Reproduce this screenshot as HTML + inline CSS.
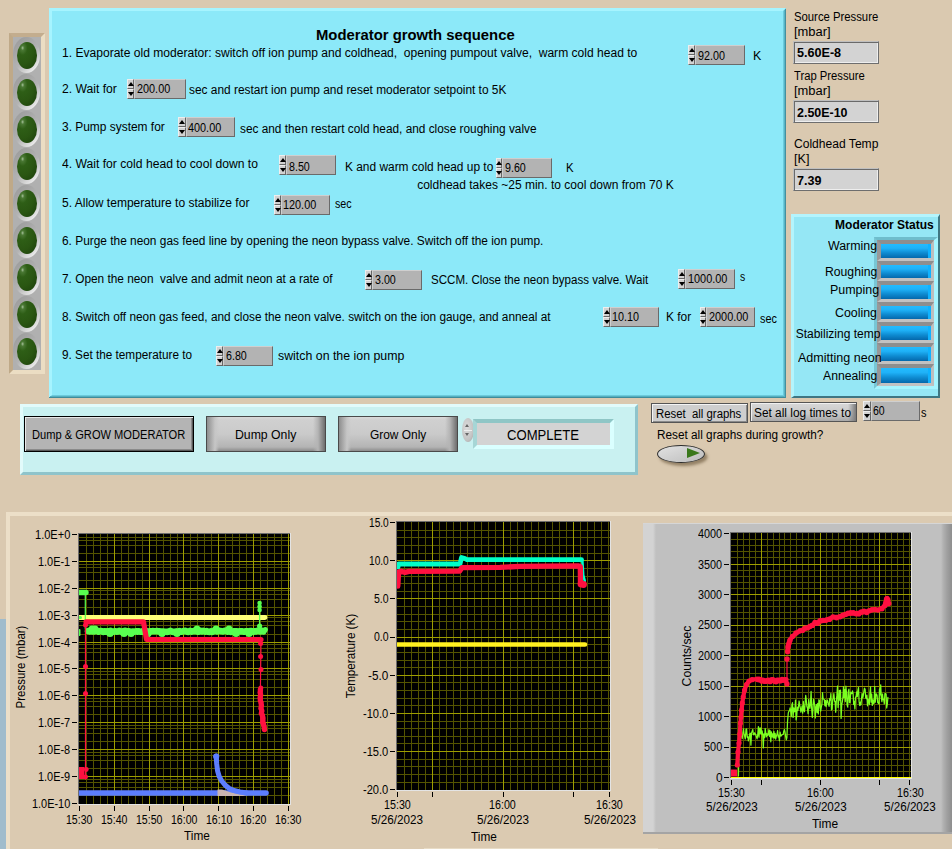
<!DOCTYPE html>
<html lang="en"><head><meta charset="utf-8"><title>Moderator growth sequence</title>
<style>
html,body{margin:0;padding:0;background:#DAC9B0;}
#r{position:relative;width:952px;height:849px;overflow:hidden;background:#DAC9B0;font-family:"Liberation Sans",sans-serif;color:#000;}
#r div,#r span,#r i{position:absolute;box-sizing:border-box;}
.t{white-space:pre;line-height:1;font-size:12px;transform-origin:0 50%;}
.led{width:19.8px;height:27px;border-radius:50%;background:radial-gradient(ellipse at 28% 22%,#A4C098 0,#4A7834 8%,#2E5E16 24%,#2A5612 55%,#1A3C0A 100%);}
.ledb{width:27px;height:35.6px;border-radius:50%;background:linear-gradient(135deg,#989898 0%,#A6A6A6 30%,#B4B4B4 55%,#D8D8D8 76%,#F2F2F2 90%,#E0E0E0 100%);}
i.up,i.dn{left:50%;margin-left:-3px;width:0;height:0;border-style:solid;border-color:transparent;}
i.up{top:1.5px;border-width:0 3px 4.5px 3px;border-bottom-color:#000;}
i.dn{top:2px;border-width:4.5px 3px 0 3px;border-top-color:#000;}
</style></head>
<body><div id="r">
<div style="left:49px;top:8px;width:737px;height:390px;background:#8CE9F9;border-style:solid;border-width:3px;border-color:#A6F4FF #6CCBDC #6CCBDC #A6F4FF;"></div>
<div style="left:50px;top:396px;width:736px;height:1px;background:#55AFC0;"></div>
<div style="left:49px;top:397px;width:737px;height:1px;background:#3E8C9B;"></div>
<div style="left:784px;top:10px;width:1px;height:387px;background:#58B4C6;"></div>
<div style="left:785px;top:9px;width:1px;height:389px;background:#44909F;"></div>
<div style="left:9px;top:33px;width:36px;height:341px;border-style:solid;border-width:4px;border-color:#C3AD8E #EBDDC3 #EBDDC3 #BFA988;background:#B0B0B0;"></div>
<div class="ledb" style="left:13.3px;top:37.4px"></div>
<div class="led" style="left:16.8px;top:41.7px"></div>
<div class="ledb" style="left:13.3px;top:74.4px"></div>
<div class="led" style="left:16.8px;top:78.7px"></div>
<div class="ledb" style="left:13.3px;top:111.4px"></div>
<div class="led" style="left:16.8px;top:115.7px"></div>
<div class="ledb" style="left:13.3px;top:148.4px"></div>
<div class="led" style="left:16.8px;top:152.7px"></div>
<div class="ledb" style="left:13.3px;top:185.4px"></div>
<div class="led" style="left:16.8px;top:189.7px"></div>
<div class="ledb" style="left:13.3px;top:222.4px"></div>
<div class="led" style="left:16.8px;top:226.7px"></div>
<div class="ledb" style="left:13.3px;top:259.4px"></div>
<div class="led" style="left:16.8px;top:263.7px"></div>
<div class="ledb" style="left:13.3px;top:296.4px"></div>
<div class="led" style="left:16.8px;top:300.7px"></div>
<div class="ledb" style="left:13.3px;top:333.4px"></div>
<div class="led" style="left:16.8px;top:337.7px"></div>
<span id="t0" class="t" style="left:316.20px;top:28.43px;font-size:14.5px;font-weight:bold;transform:scaleX(1.0233);">Moderator growth sequence</span>
<div style="left:688px;top:45px;width:7px;height:10px;background:#D2D2D2;border-style:solid;border-width:1px;border-color:#EEE #666 #666 #EEE;"><i class="up"></i></div>
<div style="left:688px;top:55px;width:7px;height:10px;background:#D2D2D2;border-style:solid;border-width:1px;border-color:#EEE #666 #666 #EEE;"><i class="dn"></i></div>
<div style="left:695px;top:45px;width:50px;height:20px;background:#B3B3B3;border-style:solid;border-width:1px;border-color:#CFCFCF #6A6A6A #6A6A6A #CFCFCF;"></div>
<span id="t1" class="t" style="left:698.20px;top:49.54px;transform:scaleX(0.8991);">92.00</span>
<div style="left:127px;top:79px;width:7px;height:10px;background:#D2D2D2;border-style:solid;border-width:1px;border-color:#EEE #666 #666 #EEE;"><i class="up"></i></div>
<div style="left:127px;top:89px;width:7px;height:10px;background:#D2D2D2;border-style:solid;border-width:1px;border-color:#EEE #666 #666 #EEE;"><i class="dn"></i></div>
<div style="left:134px;top:79px;width:52px;height:20px;background:#B3B3B3;border-style:solid;border-width:1px;border-color:#CFCFCF #6A6A6A #6A6A6A #CFCFCF;"></div>
<span id="t2" class="t" style="left:136.90px;top:83.14px;transform:scaleX(0.9046);">200.00</span>
<div style="left:178px;top:117px;width:8px;height:10px;background:#D2D2D2;border-style:solid;border-width:1px;border-color:#EEE #666 #666 #EEE;"><i class="up"></i></div>
<div style="left:178px;top:127px;width:8px;height:10px;background:#D2D2D2;border-style:solid;border-width:1px;border-color:#EEE #666 #666 #EEE;"><i class="dn"></i></div>
<div style="left:186px;top:117px;width:49px;height:20px;background:#B3B3B3;border-style:solid;border-width:1px;border-color:#CFCFCF #6A6A6A #6A6A6A #CFCFCF;"></div>
<span id="t3" class="t" style="left:187.70px;top:121.54px;transform:scaleX(0.9046);">400.00</span>
<div style="left:279px;top:155px;width:7px;height:10px;background:#D2D2D2;border-style:solid;border-width:1px;border-color:#EEE #666 #666 #EEE;"><i class="up"></i></div>
<div style="left:279px;top:165px;width:7px;height:10px;background:#D2D2D2;border-style:solid;border-width:1px;border-color:#EEE #666 #666 #EEE;"><i class="dn"></i></div>
<div style="left:286px;top:155px;width:50px;height:20px;background:#B3B3B3;border-style:solid;border-width:1px;border-color:#CFCFCF #6A6A6A #6A6A6A #CFCFCF;"></div>
<span id="t4" class="t" style="left:289.20px;top:160.54px;transform:scaleX(0.8904);">8.50</span>
<div style="left:496px;top:158px;width:6px;height:10px;background:#D2D2D2;border-style:solid;border-width:1px;border-color:#EEE #666 #666 #EEE;"><i class="up"></i></div>
<div style="left:496px;top:168px;width:6px;height:10px;background:#D2D2D2;border-style:solid;border-width:1px;border-color:#EEE #666 #666 #EEE;"><i class="dn"></i></div>
<div style="left:502px;top:158px;width:50px;height:20px;background:#B3B3B3;border-style:solid;border-width:1px;border-color:#CFCFCF #6A6A6A #6A6A6A #CFCFCF;"></div>
<span id="t5" class="t" style="left:504.90px;top:162.34px;transform:scaleX(0.8904);">9.60</span>
<div style="left:274px;top:195px;width:7px;height:10px;background:#D2D2D2;border-style:solid;border-width:1px;border-color:#EEE #666 #666 #EEE;"><i class="up"></i></div>
<div style="left:274px;top:205px;width:7px;height:10px;background:#D2D2D2;border-style:solid;border-width:1px;border-color:#EEE #666 #666 #EEE;"><i class="dn"></i></div>
<div style="left:281px;top:195px;width:49px;height:20px;background:#B3B3B3;border-style:solid;border-width:1px;border-color:#CFCFCF #6A6A6A #6A6A6A #CFCFCF;"></div>
<span id="t6" class="t" style="left:282.90px;top:198.84px;transform:scaleX(0.9046);">120.00</span>
<div style="left:365px;top:270px;width:7px;height:10px;background:#D2D2D2;border-style:solid;border-width:1px;border-color:#EEE #666 #666 #EEE;"><i class="up"></i></div>
<div style="left:365px;top:280px;width:7px;height:10px;background:#D2D2D2;border-style:solid;border-width:1px;border-color:#EEE #666 #666 #EEE;"><i class="dn"></i></div>
<div style="left:372px;top:270px;width:50px;height:20px;background:#B3B3B3;border-style:solid;border-width:1px;border-color:#CFCFCF #6A6A6A #6A6A6A #CFCFCF;"></div>
<span id="t7" class="t" style="left:375.10px;top:274.04px;transform:scaleX(0.8904);">3.00</span>
<div style="left:678px;top:269px;width:7px;height:10px;background:#D2D2D2;border-style:solid;border-width:1px;border-color:#EEE #666 #666 #EEE;"><i class="up"></i></div>
<div style="left:678px;top:279px;width:7px;height:10px;background:#D2D2D2;border-style:solid;border-width:1px;border-color:#EEE #666 #666 #EEE;"><i class="dn"></i></div>
<div style="left:685px;top:269px;width:50px;height:20px;background:#B3B3B3;border-style:solid;border-width:1px;border-color:#CFCFCF #6A6A6A #6A6A6A #CFCFCF;"></div>
<span id="t8" class="t" style="left:688.00px;top:272.94px;transform:scaleX(0.9080);">1000.00</span>
<div style="left:603px;top:307px;width:7px;height:10px;background:#D2D2D2;border-style:solid;border-width:1px;border-color:#EEE #666 #666 #EEE;"><i class="up"></i></div>
<div style="left:603px;top:317px;width:7px;height:10px;background:#D2D2D2;border-style:solid;border-width:1px;border-color:#EEE #666 #666 #EEE;"><i class="dn"></i></div>
<div style="left:610px;top:307px;width:49px;height:20px;background:#B3B3B3;border-style:solid;border-width:1px;border-color:#CFCFCF #6A6A6A #6A6A6A #CFCFCF;"></div>
<span id="t9" class="t" style="left:612.40px;top:311.04px;transform:scaleX(0.8991);">10.10</span>
<div style="left:700px;top:307px;width:6px;height:10px;background:#D2D2D2;border-style:solid;border-width:1px;border-color:#EEE #666 #666 #EEE;"><i class="up"></i></div>
<div style="left:700px;top:317px;width:6px;height:10px;background:#D2D2D2;border-style:solid;border-width:1px;border-color:#EEE #666 #666 #EEE;"><i class="dn"></i></div>
<div style="left:706px;top:307px;width:49px;height:20px;background:#B3B3B3;border-style:solid;border-width:1px;border-color:#CFCFCF #6A6A6A #6A6A6A #CFCFCF;"></div>
<span id="t10" class="t" style="left:708.70px;top:311.04px;transform:scaleX(0.9080);">2000.00</span>
<div style="left:216px;top:346px;width:7px;height:10px;background:#D2D2D2;border-style:solid;border-width:1px;border-color:#EEE #666 #666 #EEE;"><i class="up"></i></div>
<div style="left:216px;top:356px;width:7px;height:10px;background:#D2D2D2;border-style:solid;border-width:1px;border-color:#EEE #666 #666 #EEE;"><i class="dn"></i></div>
<div style="left:223px;top:346px;width:50px;height:20px;background:#B3B3B3;border-style:solid;border-width:1px;border-color:#CFCFCF #6A6A6A #6A6A6A #CFCFCF;"></div>
<span id="t11" class="t" style="left:226.20px;top:349.94px;transform:scaleX(0.8904);">6.80</span>
<div style="left:863px;top:401px;width:8px;height:10px;background:#D2D2D2;border-style:solid;border-width:1px;border-color:#EEE #666 #666 #EEE;"><i class="up"></i></div>
<div style="left:863px;top:411px;width:8px;height:10px;background:#D2D2D2;border-style:solid;border-width:1px;border-color:#EEE #666 #666 #EEE;"><i class="dn"></i></div>
<div style="left:871px;top:401px;width:49px;height:20px;background:#B3B3B3;border-style:solid;border-width:1px;border-color:#CFCFCF #6A6A6A #6A6A6A #CFCFCF;"></div>
<span id="t12" class="t" style="left:873.20px;top:404.74px;transform:scaleX(0.8758);">60</span>
<span id="t13" class="t" style="left:61.70px;top:46.84px;transform:scaleX(1.0055);">1. Evaporate old moderator: switch off ion pump and coldhead,  opening pumpout valve,  warm cold head to</span>
<span id="t14" class="t" style="left:753.20px;top:49.84px;transform:scaleX(1.0355);">K</span>
<span id="t15" class="t" style="left:61.70px;top:82.84px;transform:scaleX(1.0104);">2. Wait for</span>
<span id="t16" class="t" style="left:189.10px;top:84.04px;transform:scaleX(0.9913);">sec and restart ion pump and reset moderator setpoint to 5K</span>
<span id="t17" class="t" style="left:61.70px;top:120.84px;transform:scaleX(0.9944);">3. Pump system for</span>
<span id="t18" class="t" style="left:240.00px;top:122.54px;transform:scaleX(0.9855);">sec and then restart cold head, and close roughing valve</span>
<span id="t19" class="t" style="left:61.70px;top:158.34px;transform:scaleX(1.0120);">4. Wait for cold head to cool down to</span>
<span id="t20" class="t" style="left:345.40px;top:161.34px;transform:scaleX(0.9924);">K and warm cold head up to</span>
<span id="t21" class="t" style="left:566.20px;top:161.84px;transform:scaleX(0.9481);">K</span>
<span id="t22" class="t" style="left:417.20px;top:179.44px;">coldhead takes ~25 min. to cool down from 70 K</span>
<span id="t23" class="t" style="left:61.70px;top:196.84px;transform:scaleX(1.0034);">5. Allow temperature to stabilize for</span>
<span id="t24" class="t" style="left:335.30px;top:197.84px;transform:scaleX(0.8936);">sec</span>
<span id="t25" class="t" style="left:61.70px;top:234.84px;transform:scaleX(0.9903);">6. Purge the neon gas feed line by opening the neon bypass valve. Switch off the ion pump.</span>
<span id="t26" class="t" style="left:61.70px;top:272.84px;transform:scaleX(0.9869);">7. Open the neon  valve and admit neon at a rate of</span>
<span id="t27" class="t" style="left:431.00px;top:273.84px;transform:scaleX(0.9625);">SCCM. Close the neon bypass valve. Wait</span>
<span id="t28" class="t" style="left:740.30px;top:270.84px;transform:scaleX(0.8667);">s</span>
<span id="t29" class="t" style="left:61.70px;top:310.84px;transform:scaleX(0.9846);">8. Switch off neon gas feed, and close the neon valve. switch on the ion gauge, and anneal at</span>
<span id="t30" class="t" style="left:666.30px;top:310.84px;transform:scaleX(0.9943);">K for</span>
<span id="t31" class="t" style="left:760.20px;top:312.54px;transform:scaleX(0.9043);">sec</span>
<span id="t32" class="t" style="left:61.70px;top:348.84px;transform:scaleX(0.9793);">9. Set the temperature to</span>
<span id="t33" class="t" style="left:277.70px;top:349.84px;transform:scaleX(1.0297);">switch on the ion pump</span>
<span id="t34" class="t" style="left:793.70px;top:11.34px;transform:scaleX(0.9421);">Source Pressure</span>
<span id="t35" class="t" style="left:793.70px;top:26.24px;transform:scaleX(1.0760);">[mbar]</span>
<div style="left:793px;top:41px;width:86px;height:23px;background:#D3D3D3;border-style:solid;border-width:1px;border-color:#BFBFBF #6E6E6E #6E6E6E #BFBFBF;box-shadow:inset 1px 1px 0 #6A6A6A, inset -1px -1px 0 #EEE;"></div>
<span id="t36" class="t" style="left:796.60px;top:47.34px;font-weight:bold;transform:scaleX(1.0492);">5.60E-8</span>
<span id="t37" class="t" style="left:793.70px;top:69.84px;transform:scaleX(0.9366);">Trap Pressure</span>
<span id="t38" class="t" style="left:793.70px;top:84.64px;transform:scaleX(1.0760);">[mbar]</span>
<div style="left:793px;top:100px;width:86px;height:23px;background:#D3D3D3;border-style:solid;border-width:1px;border-color:#BFBFBF #6E6E6E #6E6E6E #BFBFBF;box-shadow:inset 1px 1px 0 #6A6A6A, inset -1px -1px 0 #EEE;"></div>
<span id="t39" class="t" style="left:796.60px;top:106.84px;font-weight:bold;transform:scaleX(1.0369);">2.50E-10</span>
<span id="t40" class="t" style="left:793.70px;top:137.84px;transform:scaleX(1.0066);">Coldhead Temp</span>
<span id="t41" class="t" style="left:793.70px;top:152.84px;transform:scaleX(1.0496);">[K]</span>
<div style="left:793px;top:168px;width:86px;height:23px;background:#D3D3D3;border-style:solid;border-width:1px;border-color:#BFBFBF #6E6E6E #6E6E6E #BFBFBF;box-shadow:inset 1px 1px 0 #6A6A6A, inset -1px -1px 0 #EEE;"></div>
<span id="t42" class="t" style="left:796.60px;top:175.34px;font-weight:bold;transform:scaleX(1.0445);">7.39</span>
<div style="left:791px;top:214px;width:149px;height:184px;background:#95E7F5;border-style:solid;border-width:3px 2px 2px 3px;border-color:#B4F4FC #3F7682 #3F7682 #B4F4FC;"></div>
<span id="t43" class="t" style="left:835.10px;top:218.94px;font-weight:bold;">Moderator Status</span>
<div style="left:874px;top:237px;width:64px;height:152px;border-style:solid;border-width:3px 4px 3px 3px;border-color:#6FBDCC #A6F5FF #A6F5FF #78C6D4;background:#B0B0B0;"></div>
<div style="left:877px;top:240px;width:57px;height:21px;border-style:solid;border-width:4px 3px 3px 4px;border-color:#8E8E8E #BEBEBE #C2C2C2 #989898;background:#B0B0B0;"></div>
<div style="left:877px;top:261px;width:57px;height:20px;border-style:solid;border-width:4px 3px 3px 4px;border-color:#8E8E8E #BEBEBE #C2C2C2 #989898;background:#B0B0B0;"></div>
<div style="left:877px;top:281px;width:57px;height:21px;border-style:solid;border-width:4px 3px 3px 4px;border-color:#8E8E8E #BEBEBE #C2C2C2 #989898;background:#B0B0B0;"></div>
<div style="left:877px;top:302px;width:57px;height:20px;border-style:solid;border-width:4px 3px 3px 4px;border-color:#8E8E8E #BEBEBE #C2C2C2 #989898;background:#B0B0B0;"></div>
<div style="left:877px;top:322px;width:57px;height:21px;border-style:solid;border-width:4px 3px 3px 4px;border-color:#8E8E8E #BEBEBE #C2C2C2 #989898;background:#B0B0B0;"></div>
<div style="left:877px;top:343px;width:57px;height:21px;border-style:solid;border-width:4px 3px 3px 4px;border-color:#8E8E8E #BEBEBE #C2C2C2 #989898;background:#B0B0B0;"></div>
<div style="left:877px;top:364px;width:57px;height:22px;border-style:solid;border-width:4px 3px 3px 4px;border-color:#8E8E8E #BEBEBE #C2C2C2 #989898;background:#B0B0B0;"></div>
<span id="t44" class="t" style="left:828.00px;top:239.64px;transform:scaleX(1.0323);">Warming</span>
<span id="t45" class="t" style="left:824.90px;top:265.54px;transform:scaleX(1.0161);">Roughing</span>
<span id="t46" class="t" style="left:829.90px;top:284.34px;transform:scaleX(1.0364);">Pumping</span>
<span id="t47" class="t" style="left:835.10px;top:307.04px;transform:scaleX(1.0319);">Cooling</span>
<span id="t48" class="t" style="left:795.70px;top:327.54px;">Stabilizing temp</span>
<span id="t49" class="t" style="left:798.10px;top:351.54px;transform:scaleX(1.0454);">Admitting neon</span>
<span id="t50" class="t" style="left:822.70px;top:369.64px;transform:scaleX(1.0189);">Annealing</span>
<div style="left:881px;top:244px;width:50px;height:14px;background:linear-gradient(#22BBFF 0%,#1FB2F8 30%,#0E8AD0 65%,#0468AC 100%);"><i style="position:absolute;right:0;top:0;bottom:0;width:3px;background:#0FB2FF"></i></div>
<div style="left:881px;top:265px;width:50px;height:13px;background:linear-gradient(#22BBFF 0%,#1FB2F8 30%,#0E8AD0 65%,#0468AC 100%);"><i style="position:absolute;right:0;top:0;bottom:0;width:3px;background:#0FB2FF"></i></div>
<div style="left:881px;top:285px;width:50px;height:14px;background:linear-gradient(#22BBFF 0%,#1FB2F8 30%,#0E8AD0 65%,#0468AC 100%);"><i style="position:absolute;right:0;top:0;bottom:0;width:3px;background:#0FB2FF"></i></div>
<div style="left:881px;top:306px;width:50px;height:13px;background:linear-gradient(#22BBFF 0%,#1FB2F8 30%,#0E8AD0 65%,#0468AC 100%);"><i style="position:absolute;right:0;top:0;bottom:0;width:3px;background:#0FB2FF"></i></div>
<div style="left:881px;top:326px;width:50px;height:14px;background:linear-gradient(#22BBFF 0%,#1FB2F8 30%,#0E8AD0 65%,#0468AC 100%);"><i style="position:absolute;right:0;top:0;bottom:0;width:3px;background:#0FB2FF"></i></div>
<div style="left:881px;top:347px;width:50px;height:14px;background:linear-gradient(#22BBFF 0%,#1FB2F8 30%,#0E8AD0 65%,#0468AC 100%);"><i style="position:absolute;right:0;top:0;bottom:0;width:3px;background:#0FB2FF"></i></div>
<div style="left:881px;top:368px;width:50px;height:15px;background:linear-gradient(#22BBFF 0%,#1FB2F8 30%,#0E8AD0 65%,#0468AC 100%);"><i style="position:absolute;right:0;top:0;bottom:0;width:3px;background:#0FB2FF"></i></div>
<div style="left:20px;top:404px;width:618px;height:71px;background:#C9F1F1;border-style:solid;border-width:3px;border-color:#E2FBFB #8FC4CB #8FC4CB #E2FBFB;"></div>
<div style="left:24px;top:416px;width:170px;height:36px;background:#B4B4B4;border:1px solid #000;box-shadow:inset 1px 1px 0 #E8E8E8, inset -1px -1px 0 #5A5A5A, inset -2px -2px 0 #8A8A8A;"></div>
<span id="t51" class="t" style="left:31.90px;top:428.74px;transform:scaleX(0.9258);">Dump &amp; GROW MODERATOR</span>
<div style="left:206px;top:416px;width:120px;height:36px;border:1px solid #4A4A4A;background:linear-gradient(90deg,#8E8E8E 0,#C6C6C6 8px,rgba(198,198,198,0) 12px,rgba(198,198,198,0) calc(100% - 12px),#B4B4B4 calc(100% - 7px),#6E6E6E 100%),linear-gradient(#DADADA 0,#D0D0D0 3px,#CACACA 50%,#B4B4B4 calc(100% - 4px),#8C8C8C 100%);"></div>
<span id="t52" class="t" style="left:235.10px;top:428.74px;transform:scaleX(1.0211);">Dump Only</span>
<div style="left:338px;top:416px;width:120px;height:36px;border:1px solid #4A4A4A;background:linear-gradient(90deg,#8E8E8E 0,#C6C6C6 8px,rgba(198,198,198,0) 12px,rgba(198,198,198,0) calc(100% - 12px),#B4B4B4 calc(100% - 7px),#6E6E6E 100%),linear-gradient(#DADADA 0,#D0D0D0 3px,#CACACA 50%,#B4B4B4 calc(100% - 4px),#8C8C8C 100%);"></div>
<span id="t53" class="t" style="left:369.90px;top:428.74px;transform:scaleX(0.9932);">Grow Only</span>
<div style="left:462px;top:418px;width:12px;height:24px;border-radius:50%;background:radial-gradient(ellipse at 40% 40%,#DCDCDC 0,#C4C4C4 60%,#9A9A9A 100%);"></div>
<div style="left:464px;top:429.5px;width:8px;height:1px;background:#EEE"></div>
<i class="up" style="left:467.5px;top:423.5px;border-width:0 2.5px 3.5px 2.5px;border-bottom-color:#666"></i><i class="dn" style="left:467.5px;top:433px;border-width:3.5px 2.5px 0 2.5px;border-top-color:#666"></i>
<div style="left:473px;top:419px;width:141px;height:30px;background:#D3D3D3;border-style:solid;border-width:4px;border-color:#8FC6C6 #DAFFFF #DAFFFF #A6D6D6;"></div>
<span id="t54" class="t" style="left:507.10px;top:427.53px;font-size:14.5px;transform:scaleX(0.9039);">COMPLETE</span>
<div style="left:651px;top:403px;width:97px;height:20px;background:#CECECE;border:1px solid #555;box-shadow:inset 1px 1px 0 #F4F4F4, inset -1px -1px 0 #8A8A8A;"></div>
<span id="t55" class="t" style="left:656.00px;top:408.34px;transform:scaleX(0.9473);">Reset  all graphs</span>
<div style="left:750px;top:402px;width:107px;height:20px;border:1px solid #555;background:linear-gradient(90deg,rgba(0,0,0,0) calc(100% - 8px),#7A7A7A 100%),linear-gradient(#D8D8D8,#C8C8C8 60%,#A8A8A8);box-shadow:inset 1px 1px 0 #F0F0F0;"></div>
<span id="t56" class="t" style="left:754.00px;top:407.34px;transform:scaleX(0.9893);">Set all log times to</span>
<span id="t57" class="t" style="left:921.10px;top:407.34px;transform:scaleX(0.9167);">s</span>
<span id="t58" class="t" style="left:657.00px;top:428.64px;transform:scaleX(0.9815);">Reset all graphs during growth?</span>
<div style="left:657px;top:444.5px;width:48px;height:18px;border-radius:50%;background:linear-gradient(160deg,#E2E2E2,#CFCFCF 50%,#BDBDBD);border:1.3px solid #2E2E2E;box-sizing:border-box;box-shadow:2.5px 3px 3px rgba(90,70,40,.55);"></div>
<div style="left:686.8px;top:448.4px;width:0;height:0;border-style:solid;border-width:5px 0 5px 13px;border-color:transparent transparent transparent #3A781C;"></div>
<div style="left:6px;top:512px;width:954px;height:348px;background:#DBCAB1;border-style:solid;border-width:4px;border-color:#ECDFC8 #ECDFC8 #ECDFC8 #ECDFC8;"></div>
<div style="left:0px;top:619px;width:6px;height:230px;background:#A0BCCC;"></div>
<div style="left:424px;top:848px;width:234px;height:1px;background:#E8DCC6;"></div>
<div style="left:643px;top:523px;width:317px;height:311px;background:linear-gradient(90deg,#D3D3D3 0,#D3D3D3 10px,#C0C0C0 13px,#C0C0C0 298px,#B2B2B2 300px,#A0A0A0 304px,#8E8E8E 309px);border-top:1px solid #D6D6D6;border-bottom:2px solid #A4A4A4;"></div>
<svg width="952" height="849" viewBox="0 0 952 849" style="position:absolute;left:0;top:0">
<g shape-rendering="crispEdges">
<rect x="78" y="533" width="213" height="272" fill="#000"/>
<rect x="86" y="534" width="1" height="271" fill="#545400"/>
<rect x="93" y="534" width="1" height="271" fill="#545400"/>
<rect x="100" y="534" width="1" height="271" fill="#545400"/>
<rect x="107" y="534" width="1" height="271" fill="#545400"/>
<rect x="121" y="534" width="1" height="271" fill="#545400"/>
<rect x="128" y="534" width="1" height="271" fill="#545400"/>
<rect x="135" y="534" width="1" height="271" fill="#545400"/>
<rect x="142" y="534" width="1" height="271" fill="#545400"/>
<rect x="156" y="534" width="1" height="271" fill="#545400"/>
<rect x="163" y="534" width="1" height="271" fill="#545400"/>
<rect x="170" y="534" width="1" height="271" fill="#545400"/>
<rect x="177" y="534" width="1" height="271" fill="#545400"/>
<rect x="190" y="534" width="1" height="271" fill="#545400"/>
<rect x="197" y="534" width="1" height="271" fill="#545400"/>
<rect x="204" y="534" width="1" height="271" fill="#545400"/>
<rect x="211" y="534" width="1" height="271" fill="#545400"/>
<rect x="225" y="534" width="1" height="271" fill="#545400"/>
<rect x="232" y="534" width="1" height="271" fill="#545400"/>
<rect x="239" y="534" width="1" height="271" fill="#545400"/>
<rect x="246" y="534" width="1" height="271" fill="#545400"/>
<rect x="260" y="534" width="1" height="271" fill="#545400"/>
<rect x="267" y="534" width="1" height="271" fill="#545400"/>
<rect x="274" y="534" width="1" height="271" fill="#545400"/>
<rect x="281" y="534" width="1" height="271" fill="#545400"/>
<rect x="79" y="553" width="212" height="1" fill="#545400"/>
<rect x="79" y="545" width="212" height="1" fill="#545400"/>
<rect x="79" y="540" width="212" height="1" fill="#545400"/>
<rect x="79" y="537" width="212" height="1" fill="#545400"/>
<rect x="79" y="580" width="212" height="1" fill="#545400"/>
<rect x="79" y="572" width="212" height="1" fill="#545400"/>
<rect x="79" y="567" width="212" height="1" fill="#545400"/>
<rect x="79" y="564" width="212" height="1" fill="#545400"/>
<rect x="79" y="607" width="212" height="1" fill="#545400"/>
<rect x="79" y="599" width="212" height="1" fill="#545400"/>
<rect x="79" y="594" width="212" height="1" fill="#545400"/>
<rect x="79" y="590" width="212" height="1" fill="#545400"/>
<rect x="79" y="634" width="212" height="1" fill="#545400"/>
<rect x="79" y="625" width="212" height="1" fill="#545400"/>
<rect x="79" y="621" width="212" height="1" fill="#545400"/>
<rect x="79" y="617" width="212" height="1" fill="#545400"/>
<rect x="79" y="660" width="212" height="1" fill="#545400"/>
<rect x="79" y="652" width="212" height="1" fill="#545400"/>
<rect x="79" y="648" width="212" height="1" fill="#545400"/>
<rect x="79" y="644" width="212" height="1" fill="#545400"/>
<rect x="79" y="687" width="212" height="1" fill="#545400"/>
<rect x="79" y="679" width="212" height="1" fill="#545400"/>
<rect x="79" y="674" width="212" height="1" fill="#545400"/>
<rect x="79" y="671" width="212" height="1" fill="#545400"/>
<rect x="79" y="714" width="212" height="1" fill="#545400"/>
<rect x="79" y="706" width="212" height="1" fill="#545400"/>
<rect x="79" y="701" width="212" height="1" fill="#545400"/>
<rect x="79" y="698" width="212" height="1" fill="#545400"/>
<rect x="79" y="741" width="212" height="1" fill="#545400"/>
<rect x="79" y="733" width="212" height="1" fill="#545400"/>
<rect x="79" y="728" width="212" height="1" fill="#545400"/>
<rect x="79" y="725" width="212" height="1" fill="#545400"/>
<rect x="79" y="768" width="212" height="1" fill="#545400"/>
<rect x="79" y="760" width="212" height="1" fill="#545400"/>
<rect x="79" y="755" width="212" height="1" fill="#545400"/>
<rect x="79" y="752" width="212" height="1" fill="#545400"/>
<rect x="79" y="795" width="212" height="1" fill="#545400"/>
<rect x="79" y="787" width="212" height="1" fill="#545400"/>
<rect x="79" y="782" width="212" height="1" fill="#545400"/>
<rect x="79" y="779" width="212" height="1" fill="#545400"/>
<rect x="114" y="534" width="1" height="271" fill="#9E9E00"/>
<rect x="149" y="534" width="1" height="271" fill="#9E9E00"/>
<rect x="183" y="534" width="1" height="271" fill="#9E9E00"/>
<rect x="218" y="534" width="1" height="271" fill="#9E9E00"/>
<rect x="253" y="534" width="1" height="271" fill="#9E9E00"/>
<rect x="288" y="534" width="1" height="271" fill="#9E9E00"/>
<rect x="79" y="561" width="212" height="1" fill="#9E9E00"/>
<rect x="79" y="588" width="212" height="1" fill="#9E9E00"/>
<rect x="79" y="615" width="212" height="1" fill="#9E9E00"/>
<rect x="79" y="642" width="212" height="1" fill="#9E9E00"/>
<rect x="79" y="668" width="212" height="1" fill="#9E9E00"/>
<rect x="79" y="695" width="212" height="1" fill="#9E9E00"/>
<rect x="79" y="722" width="212" height="1" fill="#9E9E00"/>
<rect x="79" y="749" width="212" height="1" fill="#9E9E00"/>
<rect x="79" y="776" width="212" height="1" fill="#9E9E00"/>
<rect x="78" y="533" width="1" height="272" fill="#6E6E6E"/>
<rect x="78" y="533" width="213" height="1" fill="#6E6E6E"/>
<rect x="290" y="533" width="1" height="272" fill="#E4E4E4"/>
<rect x="78" y="804" width="213" height="1" fill="#E4E4E4"/>
<rect x="72" y="534" width="5" height="1" fill="#000"/>
<rect x="72" y="561" width="5" height="1" fill="#000"/>
<rect x="72" y="588" width="5" height="1" fill="#000"/>
<rect x="72" y="615" width="5" height="1" fill="#000"/>
<rect x="72" y="642" width="5" height="1" fill="#000"/>
<rect x="72" y="668" width="5" height="1" fill="#000"/>
<rect x="72" y="695" width="5" height="1" fill="#000"/>
<rect x="72" y="722" width="5" height="1" fill="#000"/>
<rect x="72" y="749" width="5" height="1" fill="#000"/>
<rect x="72" y="776" width="5" height="1" fill="#000"/>
<rect x="72" y="803" width="5" height="1" fill="#000"/>
<rect x="79" y="806" width="1" height="5" fill="#000"/>
<rect x="114" y="806" width="1" height="5" fill="#000"/>
<rect x="149" y="806" width="1" height="5" fill="#000"/>
<rect x="183" y="806" width="1" height="5" fill="#000"/>
<rect x="218" y="806" width="1" height="5" fill="#000"/>
<rect x="253" y="806" width="1" height="5" fill="#000"/>
<rect x="288" y="806" width="1" height="5" fill="#000"/>
</g>
<clipPath id="c1"><rect x="79" y="534" width="211" height="270"/></clipPath><g clip-path="url(#c1)">
<polyline points="79.0,617.5 265.0,617.5" fill="none" stroke="#FFFF78" stroke-width="4.8" stroke-linejoin="round" stroke-linecap="round" />
<polyline points="79.5,592.5 86.0,592.5" fill="none" stroke="#58FF50" stroke-width="5.4" stroke-linejoin="round" stroke-linecap="round" />
<polyline points="85.3,594.0 85.3,629.0" fill="none" stroke="#58FF50" stroke-width="1.2" stroke-linejoin="round" stroke-linecap="round" />
<polyline points="79.5,617.5 80.5,617.5" fill="none" stroke="#58FF50" stroke-width="3" stroke-linejoin="round" stroke-linecap="round" />
<polyline points="79.5,630.0 79.5,635.0" fill="none" stroke="#58FF50" stroke-width="2" stroke-linejoin="round" stroke-linecap="round" />
<polyline points="88.0,631.0 89.5,631.4 91.0,631.1 92.5,631.4 94.0,631.5 95.5,630.8 97.0,630.7 98.5,631.7 100.0,631.0 101.5,631.0 103.0,631.9 104.5,631.3 106.0,631.7 107.5,631.3 109.0,631.5 110.5,630.9 112.0,631.5 113.5,631.7 115.0,631.3 116.5,631.6 118.0,631.5 119.5,630.8 121.0,631.6 122.5,631.4 124.0,631.1 125.5,630.7 127.0,631.7 128.5,631.3 130.0,631.6 131.5,631.8 133.0,631.6 134.5,631.8 136.0,631.2 137.5,631.7 139.0,631.2 140.5,631.8 142.0,631.8 143.5,630.8 145.0,630.9 146.5,631.0 148.0,631.9 149.5,631.2 151.0,631.5 152.5,631.1 154.0,631.3 155.5,631.2 157.0,631.1 158.5,631.4 160.0,631.4 161.5,631.8 163.0,631.5 164.5,631.8 166.0,631.7 167.5,631.9 169.0,631.5 170.5,630.9 172.0,631.7 173.5,631.9 175.0,631.8 176.5,631.4 178.0,631.6 179.5,631.0 181.0,631.7 182.5,631.4 184.0,631.0 185.5,630.8 187.0,631.7 188.5,631.9 190.0,630.8 191.5,631.7 193.0,631.2 194.5,630.9 196.0,631.1 197.5,631.6 199.0,631.7 200.5,630.8 202.0,631.4 203.5,630.8 205.0,631.6 206.5,631.1 208.0,631.8 209.5,631.9 211.0,631.3 212.5,631.9 214.0,631.1 215.5,630.8 217.0,631.4 218.5,630.7 220.0,630.9 221.5,631.2 223.0,631.4 224.5,630.9 226.0,630.8 227.5,631.7 229.0,631.1 230.5,631.9 232.0,631.8 233.5,631.2 235.0,631.3 236.5,631.3 238.0,631.5 239.5,631.4 241.0,631.4 242.5,631.4 244.0,631.8 245.5,631.3 247.0,631.2 248.5,631.6 250.0,631.0 251.5,631.1 253.0,631.9 254.5,631.3 256.0,631.4 257.5,630.7 259.0,631.2 260.5,631.4 262.0,630.7 263.5,631.4" fill="none" stroke="#58FF50" stroke-width="6.6" stroke-linejoin="round" stroke-linecap="round" />
<circle cx="92.0" cy="629.1" r="3.6" fill="#58FF50"/>
<circle cx="95.0" cy="629.1" r="3.6" fill="#58FF50"/>
<circle cx="110.0" cy="633.5" r="3.6" fill="#58FF50"/>
<circle cx="124.0" cy="633.5" r="3.6" fill="#58FF50"/>
<circle cx="131.0" cy="633.5" r="3.6" fill="#58FF50"/>
<circle cx="148.0" cy="633.5" r="3.6" fill="#58FF50"/>
<circle cx="162.0" cy="633.5" r="3.6" fill="#58FF50"/>
<circle cx="177.0" cy="633.5" r="3.6" fill="#58FF50"/>
<circle cx="197.0" cy="629.1" r="3.6" fill="#58FF50"/>
<circle cx="216.0" cy="629.1" r="3.6" fill="#58FF50"/>
<circle cx="229.0" cy="629.1" r="3.6" fill="#58FF50"/>
<circle cx="236.0" cy="633.5" r="3.6" fill="#58FF50"/>
<circle cx="249.0" cy="633.5" r="3.6" fill="#58FF50"/>
<polyline points="259.6,603.0 259.6,628.0" fill="none" stroke="#58FF50" stroke-width="1.3" stroke-linejoin="round" stroke-linecap="round" />
<circle cx="259.6" cy="603.0" r="2.3" fill="#58FF50"/><circle cx="259.6" cy="606.5" r="2.3" fill="#58FF50"/><circle cx="259.6" cy="610.0" r="2.3" fill="#58FF50"/>
<circle cx="259.6" cy="626.0" r="2.6" fill="#58FF50"/><circle cx="265.3" cy="629.5" r="2.6" fill="#58FF50"/>
<rect x="79" y="767" width="5.5" height="12" fill="#FF1040"/>
<circle cx="86.3" cy="769.5" r="2.4" fill="#FF1040"/><circle cx="85.6" cy="777.0" r="2.4" fill="#FF1040"/>
<polyline points="85.5,779.0 85.5,622.0" fill="none" stroke="#FF1040" stroke-width="1.2" stroke-linejoin="round" stroke-linecap="round" />
<circle cx="85.5" cy="693.4" r="2.5" fill="#FF1040"/><circle cx="85.5" cy="666.5" r="2.5" fill="#FF1040"/><circle cx="85.5" cy="625.0" r="2.5" fill="#FF1040"/>
<polyline points="86.0,621.8 143.5,621.8 146.5,639.5 261.0,639.5" fill="none" stroke="#FF1040" stroke-width="5.2" stroke-linejoin="round" stroke-linecap="round" />
<polyline points="261.0,640.0 260.4,690.0" fill="none" stroke="#FF1040" stroke-width="1.2" stroke-linejoin="round" stroke-linecap="round" />
<circle cx="260.6" cy="643.5" r="2.5" fill="#FF1040"/><circle cx="260.6" cy="656.5" r="2.5" fill="#FF1040"/><circle cx="261.0" cy="669.6" r="2.5" fill="#FF1040"/><circle cx="260.8" cy="688.0" r="2.5" fill="#FF1040"/>
<polyline points="260.3,690.0 260.6,700.0 261.5,711.0 262.7,720.0 264.5,729.5" fill="none" stroke="#FF1040" stroke-width="4.2" stroke-linejoin="round" stroke-linecap="round" />
<circle cx="260.4" cy="690.0" r="2.7" fill="#FF1040"/><circle cx="260.2" cy="692.5" r="2.7" fill="#FF1040"/><circle cx="260.6" cy="695.0" r="2.7" fill="#FF1040"/><circle cx="260.2" cy="697.5" r="2.7" fill="#FF1040"/><circle cx="260.3" cy="700.0" r="2.7" fill="#FF1040"/><circle cx="261.1" cy="702.8" r="2.7" fill="#FF1040"/><circle cx="261.4" cy="705.5" r="2.7" fill="#FF1040"/><circle cx="261.0" cy="708.2" r="2.7" fill="#FF1040"/><circle cx="261.8" cy="711.0" r="2.7" fill="#FF1040"/><circle cx="261.4" cy="713.2" r="2.7" fill="#FF1040"/><circle cx="262.4" cy="715.5" r="2.7" fill="#FF1040"/><circle cx="262.9" cy="717.8" r="2.7" fill="#FF1040"/><circle cx="262.9" cy="720.0" r="2.7" fill="#FF1040"/><circle cx="262.8" cy="722.4" r="2.7" fill="#FF1040"/><circle cx="263.6" cy="724.8" r="2.7" fill="#FF1040"/><circle cx="264.2" cy="727.1" r="2.7" fill="#FF1040"/><circle cx="264.5" cy="729.5" r="2.7" fill="#FF1040"/>
<polyline points="79.0,793.0 266.0,793.0" fill="none" stroke="#5C7EFF" stroke-width="5.6" stroke-linejoin="round" stroke-linecap="round" />
<polygon points="217.5,789.5 217.5,796 247,796 241,794.6 231,792.6 222,789.5" fill="#C9B4B2"/>
<polyline points="216.2,756.0 216.7,764.0 217.6,771.0 219.2,776.5 221.8,781.0 225.0,785.0 229.0,788.3 234.0,790.5 240.0,792.0 247.0,793.0" fill="none" stroke="#5C7EFF" stroke-width="5" stroke-linejoin="round" stroke-linecap="round" />
<circle cx="216.2" cy="756.5" r="3.1" fill="#5C7EFF"/>
</g>
<g shape-rendering="crispEdges">
<rect x="396" y="521" width="215" height="270" fill="#000"/>
<rect x="404" y="522" width="1" height="269" fill="#545400"/>
<rect x="411" y="522" width="1" height="269" fill="#545400"/>
<rect x="418" y="522" width="1" height="269" fill="#545400"/>
<rect x="425" y="522" width="1" height="269" fill="#545400"/>
<rect x="439" y="522" width="1" height="269" fill="#545400"/>
<rect x="446" y="522" width="1" height="269" fill="#545400"/>
<rect x="453" y="522" width="1" height="269" fill="#545400"/>
<rect x="460" y="522" width="1" height="269" fill="#545400"/>
<rect x="467" y="522" width="1" height="269" fill="#545400"/>
<rect x="474" y="522" width="1" height="269" fill="#545400"/>
<rect x="481" y="522" width="1" height="269" fill="#545400"/>
<rect x="488" y="522" width="1" height="269" fill="#545400"/>
<rect x="495" y="522" width="1" height="269" fill="#545400"/>
<rect x="510" y="522" width="1" height="269" fill="#545400"/>
<rect x="517" y="522" width="1" height="269" fill="#545400"/>
<rect x="524" y="522" width="1" height="269" fill="#545400"/>
<rect x="531" y="522" width="1" height="269" fill="#545400"/>
<rect x="538" y="522" width="1" height="269" fill="#545400"/>
<rect x="545" y="522" width="1" height="269" fill="#545400"/>
<rect x="552" y="522" width="1" height="269" fill="#545400"/>
<rect x="559" y="522" width="1" height="269" fill="#545400"/>
<rect x="566" y="522" width="1" height="269" fill="#545400"/>
<rect x="580" y="522" width="1" height="269" fill="#545400"/>
<rect x="587" y="522" width="1" height="269" fill="#545400"/>
<rect x="594" y="522" width="1" height="269" fill="#545400"/>
<rect x="601" y="522" width="1" height="269" fill="#545400"/>
<rect x="608" y="522" width="1" height="269" fill="#545400"/>
<rect x="397" y="782" width="214" height="1" fill="#545400"/>
<rect x="397" y="774" width="214" height="1" fill="#545400"/>
<rect x="397" y="766" width="214" height="1" fill="#545400"/>
<rect x="397" y="759" width="214" height="1" fill="#545400"/>
<rect x="397" y="743" width="214" height="1" fill="#545400"/>
<rect x="397" y="736" width="214" height="1" fill="#545400"/>
<rect x="397" y="728" width="214" height="1" fill="#545400"/>
<rect x="397" y="721" width="214" height="1" fill="#545400"/>
<rect x="397" y="705" width="214" height="1" fill="#545400"/>
<rect x="397" y="698" width="214" height="1" fill="#545400"/>
<rect x="397" y="690" width="214" height="1" fill="#545400"/>
<rect x="397" y="682" width="214" height="1" fill="#545400"/>
<rect x="397" y="667" width="214" height="1" fill="#545400"/>
<rect x="397" y="660" width="214" height="1" fill="#545400"/>
<rect x="397" y="652" width="214" height="1" fill="#545400"/>
<rect x="397" y="644" width="214" height="1" fill="#545400"/>
<rect x="397" y="629" width="214" height="1" fill="#545400"/>
<rect x="397" y="621" width="214" height="1" fill="#545400"/>
<rect x="397" y="614" width="214" height="1" fill="#545400"/>
<rect x="397" y="606" width="214" height="1" fill="#545400"/>
<rect x="397" y="591" width="214" height="1" fill="#545400"/>
<rect x="397" y="583" width="214" height="1" fill="#545400"/>
<rect x="397" y="576" width="214" height="1" fill="#545400"/>
<rect x="397" y="568" width="214" height="1" fill="#545400"/>
<rect x="397" y="553" width="214" height="1" fill="#545400"/>
<rect x="397" y="545" width="214" height="1" fill="#545400"/>
<rect x="397" y="537" width="214" height="1" fill="#545400"/>
<rect x="397" y="530" width="214" height="1" fill="#545400"/>
<rect x="432" y="522" width="1" height="269" fill="#9E9E00"/>
<rect x="503" y="522" width="1" height="269" fill="#9E9E00"/>
<rect x="573" y="522" width="1" height="269" fill="#9E9E00"/>
<rect x="397" y="751" width="214" height="1" fill="#9E9E00"/>
<rect x="397" y="713" width="214" height="1" fill="#9E9E00"/>
<rect x="397" y="675" width="214" height="1" fill="#9E9E00"/>
<rect x="397" y="637" width="214" height="1" fill="#9E9E00"/>
<rect x="397" y="598" width="214" height="1" fill="#9E9E00"/>
<rect x="397" y="560" width="214" height="1" fill="#9E9E00"/>
<rect x="396" y="521" width="1" height="270" fill="#6E6E6E"/>
<rect x="396" y="521" width="215" height="1" fill="#6E6E6E"/>
<rect x="610" y="521" width="1" height="270" fill="#E4E4E4"/>
<rect x="396" y="790" width="215" height="1" fill="#E4E4E4"/>
<rect x="390" y="789" width="5" height="1" fill="#000"/>
<rect x="390" y="751" width="5" height="1" fill="#000"/>
<rect x="390" y="713" width="5" height="1" fill="#000"/>
<rect x="390" y="675" width="5" height="1" fill="#000"/>
<rect x="390" y="637" width="5" height="1" fill="#000"/>
<rect x="390" y="598" width="5" height="1" fill="#000"/>
<rect x="390" y="560" width="5" height="1" fill="#000"/>
<rect x="390" y="522" width="5" height="1" fill="#000"/>
<rect x="397" y="792" width="1" height="5" fill="#000"/>
<rect x="432" y="792" width="1" height="5" fill="#000"/>
<rect x="503" y="792" width="1" height="5" fill="#000"/>
<rect x="573" y="792" width="1" height="5" fill="#000"/>
<rect x="609" y="792" width="1" height="5" fill="#000"/>
</g>
<clipPath id="c2"><rect x="397" y="522" width="213" height="268"/></clipPath><g clip-path="url(#c2)">
<polyline points="397.0,644.5 585.0,644.5" fill="none" stroke="#FFF020" stroke-width="4.6" stroke-linejoin="round" stroke-linecap="round" stroke-linecap="round"/>
<polyline points="398.0,567.0 398.5,564.0 460.0,564.0 461.5,557.5 465.0,558.5 467.0,559.7 581.5,559.7" fill="none" stroke="#00FFC8" stroke-width="4.8" stroke-linejoin="round" stroke-linecap="round" />
<polyline points="582.3,560.0 583.2,575.0 584.8,581.0" fill="none" stroke="#00FFC8" stroke-width="2.6" stroke-linejoin="round" stroke-linecap="round" />
<polyline points="397.8,586.0 398.6,572.0 401.0,571.2 405.0,572.4 409.0,571.4 459.5,571.2 462.0,567.6 500.0,567.4 520.0,566.4 578.0,565.8 580.3,566.5 580.5,584.0" fill="none" stroke="#FF1040" stroke-width="5.3" stroke-linejoin="round" stroke-linecap="round" />
<circle cx="581.0" cy="584.0" r="3.4" fill="#FF1040"/><circle cx="583.5" cy="584.5" r="3.4" fill="#FF1040"/>
</g>
<g shape-rendering="crispEdges">
<rect x="730" y="532" width="182" height="247" fill="#000"/>
<rect x="737" y="533" width="1" height="246" fill="#545400"/>
<rect x="743" y="533" width="1" height="246" fill="#545400"/>
<rect x="749" y="533" width="1" height="246" fill="#545400"/>
<rect x="755" y="533" width="1" height="246" fill="#545400"/>
<rect x="767" y="533" width="1" height="246" fill="#545400"/>
<rect x="773" y="533" width="1" height="246" fill="#545400"/>
<rect x="779" y="533" width="1" height="246" fill="#545400"/>
<rect x="784" y="533" width="1" height="246" fill="#545400"/>
<rect x="790" y="533" width="1" height="246" fill="#545400"/>
<rect x="796" y="533" width="1" height="246" fill="#545400"/>
<rect x="802" y="533" width="1" height="246" fill="#545400"/>
<rect x="808" y="533" width="1" height="246" fill="#545400"/>
<rect x="814" y="533" width="1" height="246" fill="#545400"/>
<rect x="826" y="533" width="1" height="246" fill="#545400"/>
<rect x="832" y="533" width="1" height="246" fill="#545400"/>
<rect x="838" y="533" width="1" height="246" fill="#545400"/>
<rect x="844" y="533" width="1" height="246" fill="#545400"/>
<rect x="850" y="533" width="1" height="246" fill="#545400"/>
<rect x="856" y="533" width="1" height="246" fill="#545400"/>
<rect x="862" y="533" width="1" height="246" fill="#545400"/>
<rect x="868" y="533" width="1" height="246" fill="#545400"/>
<rect x="874" y="533" width="1" height="246" fill="#545400"/>
<rect x="885" y="533" width="1" height="246" fill="#545400"/>
<rect x="891" y="533" width="1" height="246" fill="#545400"/>
<rect x="897" y="533" width="1" height="246" fill="#545400"/>
<rect x="903" y="533" width="1" height="246" fill="#545400"/>
<rect x="909" y="533" width="1" height="246" fill="#545400"/>
<rect x="731" y="771" width="181" height="1" fill="#545400"/>
<rect x="731" y="765" width="181" height="1" fill="#545400"/>
<rect x="731" y="759" width="181" height="1" fill="#545400"/>
<rect x="731" y="753" width="181" height="1" fill="#545400"/>
<rect x="731" y="740" width="181" height="1" fill="#545400"/>
<rect x="731" y="734" width="181" height="1" fill="#545400"/>
<rect x="731" y="728" width="181" height="1" fill="#545400"/>
<rect x="731" y="722" width="181" height="1" fill="#545400"/>
<rect x="731" y="710" width="181" height="1" fill="#545400"/>
<rect x="731" y="704" width="181" height="1" fill="#545400"/>
<rect x="731" y="698" width="181" height="1" fill="#545400"/>
<rect x="731" y="692" width="181" height="1" fill="#545400"/>
<rect x="731" y="679" width="181" height="1" fill="#545400"/>
<rect x="731" y="673" width="181" height="1" fill="#545400"/>
<rect x="731" y="667" width="181" height="1" fill="#545400"/>
<rect x="731" y="661" width="181" height="1" fill="#545400"/>
<rect x="731" y="649" width="181" height="1" fill="#545400"/>
<rect x="731" y="643" width="181" height="1" fill="#545400"/>
<rect x="731" y="637" width="181" height="1" fill="#545400"/>
<rect x="731" y="631" width="181" height="1" fill="#545400"/>
<rect x="731" y="618" width="181" height="1" fill="#545400"/>
<rect x="731" y="612" width="181" height="1" fill="#545400"/>
<rect x="731" y="606" width="181" height="1" fill="#545400"/>
<rect x="731" y="600" width="181" height="1" fill="#545400"/>
<rect x="731" y="588" width="181" height="1" fill="#545400"/>
<rect x="731" y="582" width="181" height="1" fill="#545400"/>
<rect x="731" y="576" width="181" height="1" fill="#545400"/>
<rect x="731" y="570" width="181" height="1" fill="#545400"/>
<rect x="731" y="557" width="181" height="1" fill="#545400"/>
<rect x="731" y="551" width="181" height="1" fill="#545400"/>
<rect x="731" y="545" width="181" height="1" fill="#545400"/>
<rect x="731" y="539" width="181" height="1" fill="#545400"/>
<rect x="761" y="533" width="1" height="246" fill="#9E9E00"/>
<rect x="820" y="533" width="1" height="246" fill="#9E9E00"/>
<rect x="879" y="533" width="1" height="246" fill="#9E9E00"/>
<rect x="731" y="747" width="181" height="1" fill="#9E9E00"/>
<rect x="731" y="716" width="181" height="1" fill="#9E9E00"/>
<rect x="731" y="686" width="181" height="1" fill="#9E9E00"/>
<rect x="731" y="655" width="181" height="1" fill="#9E9E00"/>
<rect x="731" y="625" width="181" height="1" fill="#9E9E00"/>
<rect x="731" y="594" width="181" height="1" fill="#9E9E00"/>
<rect x="731" y="564" width="181" height="1" fill="#9E9E00"/>
<rect x="730" y="532" width="1" height="247" fill="#6E6E6E"/>
<rect x="730" y="532" width="182" height="1" fill="#6E6E6E"/>
<rect x="911" y="532" width="1" height="247" fill="#E4E4E4"/>
<rect x="730" y="778" width="182" height="1" fill="#E4E4E4"/>
<rect x="724" y="777" width="5" height="1" fill="#000"/>
<rect x="724" y="747" width="5" height="1" fill="#000"/>
<rect x="724" y="716" width="5" height="1" fill="#000"/>
<rect x="724" y="686" width="5" height="1" fill="#000"/>
<rect x="724" y="655" width="5" height="1" fill="#000"/>
<rect x="724" y="625" width="5" height="1" fill="#000"/>
<rect x="724" y="594" width="5" height="1" fill="#000"/>
<rect x="724" y="564" width="5" height="1" fill="#000"/>
<rect x="724" y="533" width="5" height="1" fill="#000"/>
<rect x="731" y="780" width="1" height="5" fill="#000"/>
<rect x="761" y="780" width="1" height="5" fill="#000"/>
<rect x="820" y="780" width="1" height="5" fill="#000"/>
<rect x="879" y="780" width="1" height="5" fill="#000"/>
<rect x="909" y="780" width="1" height="5" fill="#000"/>
</g>
<clipPath id="c3"><rect x="731" y="533" width="180" height="245"/></clipPath><g clip-path="url(#c3)">
<rect x="731" y="777" width="180" height="1" fill="#FFFF00" shape-rendering="crispEdges"/>
<polyline points="738.5,776.0 738.8,748.0 740.0,742.0 741.0,729.4 741.6,736.1 742.2,738.7 742.9,732.3 743.5,728.9 744.1,734.2 744.7,736.4 745.3,739.0 746.0,729.3 746.6,729.0 747.2,737.3 747.8,736.4 748.4,740.8 749.1,738.5 749.7,733.9 750.3,733.2 750.9,745.1 751.5,733.1 752.2,731.0 752.8,729.5 753.4,734.7 754.0,734.8 754.6,732.8 755.3,734.0 755.9,735.3 756.5,737.1 757.1,738.8 757.7,735.0 758.4,726.6 759.0,737.1 759.6,728.2 760.2,733.4 760.8,727.9 761.5,734.1 762.1,730.8 762.7,735.0 763.3,747.9 763.9,733.8 764.6,737.6 765.2,728.5 765.8,732.8 766.4,736.8 767.0,733.6 767.7,735.5 768.3,734.4 768.9,729.7 769.5,736.3 770.1,730.5 770.8,741.8 771.4,731.8 772.0,736.8 772.6,733.9 773.2,737.9 773.9,731.3 774.5,738.0 775.1,733.3 775.7,739.1 776.3,736.4 777.0,734.4 777.6,730.5 778.2,737.0 778.8,735.7 779.4,740.6 780.1,732.1 780.7,736.0 781.3,735.8 781.9,734.9 782.5,734.5 783.2,734.4 783.8,731.1 784.4,729.4 785.0,732.0 785.6,736.1 786.3,739.9 786.9,737.7 787.5,722.0 788.3,712.9 788.9,711.3 789.5,710.8 790.1,707.8 790.7,711.1 791.3,716.6 791.9,704.8 792.5,702.7 793.1,717.5 793.7,707.9 794.3,711.9 794.9,711.3 795.5,700.0 796.1,719.9 796.7,716.2 797.3,707.2 797.9,710.3 798.5,706.8 799.1,701.0 799.7,705.3 800.3,708.0 800.9,712.1 801.5,709.7 802.1,706.0 802.7,713.2 803.3,701.3 803.9,710.0 804.5,711.7 805.1,703.8 805.7,695.3 806.3,700.2 806.9,706.5 807.5,708.1 808.1,713.7 808.7,699.4 809.3,704.9 809.9,708.5 810.5,703.9 811.1,691.4 811.7,709.1 812.3,717.5 812.9,710.1 813.5,699.2 814.1,702.0 814.7,705.4 815.3,718.0 815.9,707.5 816.5,704.5 817.1,712.5 817.7,703.3 818.3,714.0 818.9,699.7 819.5,700.8 820.1,707.4 820.7,711.2 821.3,706.8 821.9,704.7 822.5,692.7 823.1,698.8 823.7,699.2 824.3,699.5 824.9,705.7 825.5,700.4 826.1,706.6 826.7,702.5 827.3,700.0 827.9,702.4 828.5,704.0 829.1,706.3 829.7,698.7 830.3,700.0 830.9,693.5 831.5,710.0 832.1,709.0 832.7,699.7 833.3,697.9 833.9,693.5 834.5,701.3 835.1,701.3 835.7,712.3 836.3,701.3 836.9,695.4 837.5,686.0 838.1,707.4 838.7,700.5 839.3,690.3 839.9,700.2 840.5,690.1 841.1,718.5 841.7,705.1 842.3,702.0 842.9,697.7 843.5,686.6 844.1,697.7 844.7,689.7 845.3,701.6 845.9,686.2 846.5,693.0 847.1,704.9 847.7,707.2 848.3,691.3 848.9,689.2 849.5,702.7 850.1,702.5 850.7,692.1 851.3,693.7 851.9,693.7 852.5,690.9 853.1,693.7 853.7,704.5 854.3,701.3 854.9,709.0 855.5,697.0 856.1,696.7 856.7,691.9 857.3,696.7 857.9,690.1 858.5,687.5 859.1,701.4 859.7,705.5 860.3,702.2 860.9,705.0 861.5,698.9 862.1,693.5 862.7,698.0 863.3,695.5 863.9,691.4 864.5,688.2 865.1,689.4 865.7,697.7 866.3,698.6 866.9,695.1 867.5,705.8 868.1,698.8 868.7,701.1 869.3,704.7 869.9,693.3 870.5,686.9 871.1,702.2 871.7,694.1 872.3,705.4 872.9,699.9 873.5,703.7 874.1,702.4 874.7,686.5 875.3,702.2 875.9,694.4 876.5,693.9 877.1,695.8 877.7,702.5 878.3,703.2 878.9,703.9 879.5,688.9 880.1,694.9 880.7,684.9 881.3,697.7 881.9,701.6 882.5,694.0 883.1,699.6 883.7,699.5 884.3,703.8 884.9,693.6 885.5,693.5 886.1,693.9 886.7,708.0 887.3,704.2 887.9,697.4" fill="none" stroke="#7CFF20" stroke-width="1.25" stroke-linejoin="round" stroke-linecap="round" />
<rect x="731" y="769.5" width="6" height="7" fill="#FF1040"/>
<polyline points="737.3,765.0 738.0,752.0 739.0,743.0 739.8,734.0 740.4,723.0 741.0,717.0 741.6,710.0 742.3,703.0 743.2,697.0 744.6,690.0 746.5,684.5 749.0,681.0 752.0,679.6 757.0,679.0 759.0,680.1 761.0,680.3 763.0,680.5 765.0,680.8 767.0,680.5 769.0,680.9 771.0,679.5 773.0,680.3 775.0,681.1 777.0,680.7 779.0,681.1 781.0,679.9 783.0,680.6 785.0,680.3 787.0,683.0" fill="none" stroke="#FF1040" stroke-width="4.2" stroke-linejoin="round" stroke-linecap="round" />
<circle cx="737.3" cy="765.0" r="2.6" fill="#FF1040"/><circle cx="738.0" cy="752.0" r="2.6" fill="#FF1040"/><circle cx="739.0" cy="743.0" r="2.6" fill="#FF1040"/><circle cx="739.8" cy="734.0" r="2.6" fill="#FF1040"/><circle cx="740.4" cy="723.0" r="2.6" fill="#FF1040"/><circle cx="741.0" cy="717.0" r="2.6" fill="#FF1040"/><circle cx="741.6" cy="710.0" r="2.6" fill="#FF1040"/><circle cx="742.3" cy="703.0" r="2.6" fill="#FF1040"/><circle cx="743.2" cy="697.0" r="2.6" fill="#FF1040"/><circle cx="744.6" cy="690.0" r="2.6" fill="#FF1040"/><circle cx="746.5" cy="684.5" r="2.6" fill="#FF1040"/><circle cx="749.0" cy="681.0" r="2.6" fill="#FF1040"/>
<circle cx="752.0" cy="679.7" r="2.6" fill="#FF1040"/><circle cx="757.0" cy="679.1" r="2.6" fill="#FF1040"/><circle cx="759.0" cy="679.2" r="2.6" fill="#FF1040"/><circle cx="761.0" cy="679.8" r="2.6" fill="#FF1040"/><circle cx="763.0" cy="680.1" r="2.6" fill="#FF1040"/><circle cx="765.0" cy="681.5" r="2.6" fill="#FF1040"/><circle cx="767.0" cy="681.0" r="2.6" fill="#FF1040"/><circle cx="769.0" cy="680.3" r="2.6" fill="#FF1040"/><circle cx="771.0" cy="680.0" r="2.6" fill="#FF1040"/><circle cx="773.0" cy="679.6" r="2.6" fill="#FF1040"/><circle cx="775.0" cy="681.3" r="2.6" fill="#FF1040"/><circle cx="777.0" cy="680.0" r="2.6" fill="#FF1040"/><circle cx="779.0" cy="680.2" r="2.6" fill="#FF1040"/><circle cx="781.0" cy="680.6" r="2.6" fill="#FF1040"/><circle cx="783.0" cy="680.0" r="2.6" fill="#FF1040"/><circle cx="785.0" cy="679.8" r="2.6" fill="#FF1040"/><circle cx="787.0" cy="683.9" r="2.6" fill="#FF1040"/><circle cx="758.0" cy="679.7" r="2.6" fill="#FF1040"/><circle cx="760.0" cy="679.7" r="2.6" fill="#FF1040"/><circle cx="762.0" cy="681.2" r="2.6" fill="#FF1040"/><circle cx="764.0" cy="680.6" r="2.6" fill="#FF1040"/><circle cx="766.0" cy="681.1" r="2.6" fill="#FF1040"/><circle cx="768.0" cy="680.0" r="2.6" fill="#FF1040"/><circle cx="770.0" cy="681.7" r="2.6" fill="#FF1040"/><circle cx="772.0" cy="679.8" r="2.6" fill="#FF1040"/><circle cx="774.0" cy="681.1" r="2.6" fill="#FF1040"/><circle cx="776.0" cy="681.8" r="2.6" fill="#FF1040"/><circle cx="778.0" cy="680.3" r="2.6" fill="#FF1040"/><circle cx="780.0" cy="680.9" r="2.6" fill="#FF1040"/><circle cx="782.0" cy="679.3" r="2.6" fill="#FF1040"/><circle cx="784.0" cy="679.9" r="2.6" fill="#FF1040"/><circle cx="786.0" cy="679.5" r="2.6" fill="#FF1040"/>
<polyline points="787.0,683.0 787.0,659.0" fill="none" stroke="#FF1040" stroke-width="1.2" stroke-linejoin="round" stroke-linecap="round" />
<circle cx="787.0" cy="659.0" r="2.7" fill="#FF1040"/>
<polyline points="787.6,650.8 788.3,645.1 790.0,639.4 792.5,636.7 796.0,633.3 800.0,630.8 805.0,628.9 810.0,626.0 815.0,623.4 820.0,621.5 826.0,619.9 833.0,617.3 840.0,616.6 848.0,613.8 856.0,613.3 864.0,612.2 872.0,610.0 878.0,609.9 882.0,608.0 885.0,605.6 886.5,600.4 887.0,598.0 888.8,603.6" fill="none" stroke="#FF1040" stroke-width="4.4" stroke-linejoin="round" stroke-linecap="round" />
<circle cx="787.6" cy="651.7" r="2.7" fill="#FF1040"/><circle cx="788.0" cy="647.3" r="2.7" fill="#FF1040"/><circle cx="788.3" cy="645.6" r="2.7" fill="#FF1040"/><circle cx="789.1" cy="643.1" r="2.7" fill="#FF1040"/><circle cx="790.0" cy="640.3" r="2.7" fill="#FF1040"/><circle cx="792.5" cy="636.4" r="2.7" fill="#FF1040"/><circle cx="796.0" cy="633.0" r="2.7" fill="#FF1040"/><circle cx="800.0" cy="630.8" r="2.7" fill="#FF1040"/><circle cx="802.5" cy="630.4" r="2.7" fill="#FF1040"/><circle cx="805.0" cy="628.1" r="2.7" fill="#FF1040"/><circle cx="807.5" cy="627.9" r="2.7" fill="#FF1040"/><circle cx="810.0" cy="626.6" r="2.7" fill="#FF1040"/><circle cx="812.5" cy="625.4" r="2.7" fill="#FF1040"/><circle cx="815.0" cy="622.5" r="2.7" fill="#FF1040"/><circle cx="817.5" cy="623.3" r="2.7" fill="#FF1040"/><circle cx="820.0" cy="620.7" r="2.7" fill="#FF1040"/><circle cx="823.0" cy="620.4" r="2.7" fill="#FF1040"/><circle cx="826.0" cy="620.2" r="2.7" fill="#FF1040"/><circle cx="829.5" cy="619.4" r="2.7" fill="#FF1040"/><circle cx="833.0" cy="616.9" r="2.7" fill="#FF1040"/><circle cx="836.5" cy="617.8" r="2.7" fill="#FF1040"/><circle cx="840.0" cy="616.7" r="2.7" fill="#FF1040"/><circle cx="842.7" cy="615.3" r="2.7" fill="#FF1040"/><circle cx="845.3" cy="614.4" r="2.7" fill="#FF1040"/><circle cx="848.0" cy="613.2" r="2.7" fill="#FF1040"/><circle cx="850.7" cy="612.8" r="2.7" fill="#FF1040"/><circle cx="853.3" cy="612.8" r="2.7" fill="#FF1040"/><circle cx="856.0" cy="613.7" r="2.7" fill="#FF1040"/><circle cx="858.7" cy="613.9" r="2.7" fill="#FF1040"/><circle cx="861.3" cy="611.9" r="2.7" fill="#FF1040"/><circle cx="864.0" cy="611.3" r="2.7" fill="#FF1040"/><circle cx="866.7" cy="612.5" r="2.7" fill="#FF1040"/><circle cx="869.3" cy="610.8" r="2.7" fill="#FF1040"/><circle cx="872.0" cy="609.8" r="2.7" fill="#FF1040"/><circle cx="875.0" cy="609.5" r="2.7" fill="#FF1040"/><circle cx="878.0" cy="610.1" r="2.7" fill="#FF1040"/><circle cx="882.0" cy="608.7" r="2.7" fill="#FF1040"/><circle cx="885.0" cy="605.5" r="2.7" fill="#FF1040"/><circle cx="885.8" cy="602.8" r="2.7" fill="#FF1040"/><circle cx="886.5" cy="599.5" r="2.7" fill="#FF1040"/><circle cx="887.0" cy="598.8" r="2.7" fill="#FF1040"/><circle cx="887.9" cy="599.9" r="2.7" fill="#FF1040"/><circle cx="888.8" cy="603.6" r="2.7" fill="#FF1040"/>
</g>
</svg>
<span id="t59" class="t" style="left:35.00px;top:528.94px;transform:scaleX(0.9199);">1.0E+0</span>
<span id="t60" class="t" style="left:38.10px;top:555.84px;transform:scaleX(0.9106);">1.0E-1</span>
<span id="t61" class="t" style="left:38.10px;top:582.74px;transform:scaleX(0.9106);">1.0E-2</span>
<span id="t62" class="t" style="left:38.10px;top:609.64px;transform:scaleX(0.9106);">1.0E-3</span>
<span id="t63" class="t" style="left:38.10px;top:636.54px;transform:scaleX(0.9106);">1.0E-4</span>
<span id="t64" class="t" style="left:38.10px;top:663.44px;transform:scaleX(0.9106);">1.0E-5</span>
<span id="t65" class="t" style="left:38.10px;top:690.34px;transform:scaleX(0.9106);">1.0E-6</span>
<span id="t66" class="t" style="left:38.10px;top:717.24px;transform:scaleX(0.9106);">1.0E-7</span>
<span id="t67" class="t" style="left:38.10px;top:744.14px;transform:scaleX(0.9106);">1.0E-8</span>
<span id="t68" class="t" style="left:38.10px;top:771.04px;transform:scaleX(0.9106);">1.0E-9</span>
<span id="t69" class="t" style="left:32.10px;top:797.94px;transform:scaleX(0.9088);">1.0E-10</span>
<span id="t70" class="t" style="left:66.30px;top:813.54px;transform:scaleX(0.8791);">15:30</span>
<span id="t71" class="t" style="left:101.10px;top:813.54px;transform:scaleX(0.8791);">15:40</span>
<span id="t72" class="t" style="left:135.90px;top:813.54px;transform:scaleX(0.8791);">15:50</span>
<span id="t73" class="t" style="left:170.70px;top:813.54px;transform:scaleX(0.8791);">16:00</span>
<span id="t74" class="t" style="left:205.50px;top:813.54px;transform:scaleX(0.8791);">16:10</span>
<span id="t75" class="t" style="left:240.30px;top:813.54px;transform:scaleX(0.8791);">16:20</span>
<span id="t76" class="t" style="left:275.10px;top:813.54px;transform:scaleX(0.8791);">16:30</span>
<span id="t77" class="t" style="left:183.70px;top:830.34px;transform:scaleX(0.9834);">Time</span>
<span id="t78" class="t" style="left:368.50px;top:516.84px;transform:scaleX(0.8433);">15.0</span>
<span id="t79" class="t" style="left:368.50px;top:555.01px;transform:scaleX(0.8433);">10.0</span>
<span id="t80" class="t" style="left:373.60px;top:593.18px;transform:scaleX(0.8749);">5.0</span>
<span id="t81" class="t" style="left:373.60px;top:631.35px;transform:scaleX(0.8749);">0.0</span>
<span id="t82" class="t" style="left:368.00px;top:669.52px;transform:scaleX(0.9764);">-5.0</span>
<span id="t83" class="t" style="left:362.90px;top:707.69px;transform:scaleX(0.9247);">-10.0</span>
<span id="t84" class="t" style="left:362.90px;top:745.86px;transform:scaleX(0.9247);">-15.0</span>
<span id="t85" class="t" style="left:362.90px;top:784.03px;transform:scaleX(0.9247);">-20.0</span>
<span id="t86" class="t" style="left:383.70px;top:798.54px;transform:scaleX(0.8924);">15:30</span>
<span id="t87" class="t" style="left:371.10px;top:814.04px;transform:scaleX(0.9740);">5/26/2023</span>
<span id="t88" class="t" style="left:489.20px;top:798.54px;transform:scaleX(0.8924);">16:00</span>
<span id="t89" class="t" style="left:476.60px;top:814.04px;transform:scaleX(0.9740);">5/26/2023</span>
<span id="t90" class="t" style="left:596.00px;top:798.54px;transform:scaleX(0.8924);">16:30</span>
<span id="t91" class="t" style="left:584.20px;top:814.04px;transform:scaleX(0.9740);">5/26/2023</span>
<span id="t92" class="t" style="left:470.70px;top:830.94px;transform:scaleX(0.9834);">Time</span>
<span id="t93" class="t" style="left:698.00px;top:528.14px;transform:scaleX(0.9025);">4000</span>
<span id="t94" class="t" style="left:698.00px;top:558.59px;transform:scaleX(0.9025);">3500</span>
<span id="t95" class="t" style="left:698.00px;top:589.04px;transform:scaleX(0.9025);">3000</span>
<span id="t96" class="t" style="left:698.00px;top:619.49px;transform:scaleX(0.9025);">2500</span>
<span id="t97" class="t" style="left:698.00px;top:649.94px;transform:scaleX(0.9025);">2000</span>
<span id="t98" class="t" style="left:698.00px;top:680.39px;transform:scaleX(0.9025);">1500</span>
<span id="t99" class="t" style="left:698.00px;top:710.84px;transform:scaleX(0.9025);">1000</span>
<span id="t100" class="t" style="left:703.90px;top:741.29px;transform:scaleX(0.9086);">500</span>
<span id="t101" class="t" style="left:715.50px;top:771.74px;transform:scaleX(0.9869);">0</span>
<span id="t102" class="t" style="left:718.00px;top:786.64px;transform:scaleX(0.8924);">15:30</span>
<span id="t103" class="t" style="left:705.50px;top:801.24px;transform:scaleX(0.9702);">5/26/2023</span>
<span id="t104" class="t" style="left:807.00px;top:786.64px;transform:scaleX(0.8924);">16:00</span>
<span id="t105" class="t" style="left:794.50px;top:801.24px;transform:scaleX(0.9702);">5/26/2023</span>
<span id="t106" class="t" style="left:896.90px;top:786.64px;transform:scaleX(0.8924);">16:30</span>
<span id="t107" class="t" style="left:884.40px;top:801.24px;transform:scaleX(0.9702);">5/26/2023</span>
<span id="t108" class="t" style="left:811.60px;top:817.74px;transform:scaleX(0.9949);">Time</span>
<span id="t109" class="t" style="left:25.0px;top:667.4px;transform-origin:0 0;transform:rotate(-90deg) scaleX(0.9552) translate(-50%,-10.16px);">Pressure (mbar)</span>
<span id="t110" class="t" style="left:355px;top:655.5px;transform-origin:0 0;transform:rotate(-90deg) scaleX(0.9734) translate(-50%,-10.16px);">Temperature (K)</span>
<span id="t111" class="t" style="left:690.6px;top:655.6px;transform-origin:0 0;transform:rotate(-90deg) scaleX(1.0128) translate(-50%,-10.16px);">Counts/sec</span>
</div></body></html>
